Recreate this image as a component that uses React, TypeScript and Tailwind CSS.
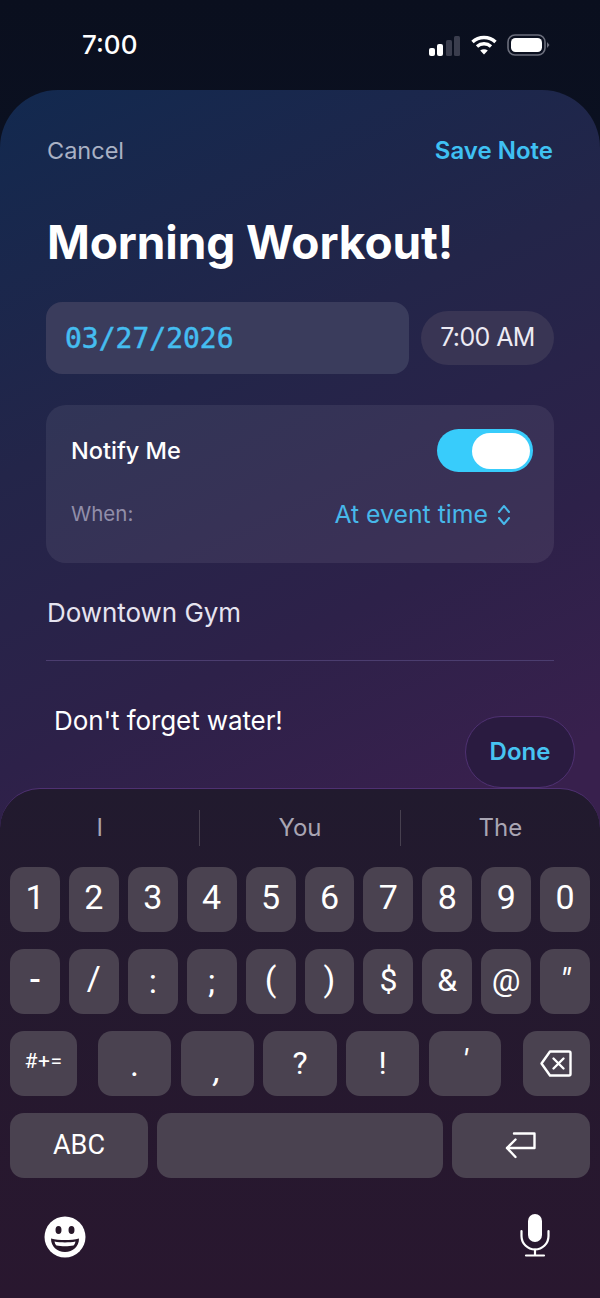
import type { ReactNode } from "react";

const row1 = ["1", "2", "3", "4", "5", "6", "7", "8", "9", "0"];

// ── Small drawn icons ─────────────────────────────────────────────────────
function StatusIcons() {
  return (
    <div className="flex items-center">
      <svg width="32" height="20" viewBox="0 0 32 20" className="mt-[1px]">
        <rect x="0" y="12" width="6" height="8" rx="2" fill="#fff" />
        <rect x="8" y="8" width="6" height="12" rx="2" fill="#fff" />
        <rect x="17" y="4" width="6" height="16" rx="1.5" fill="#3a3d4d" />
        <rect x="25" y="0" width="6" height="20" rx="1.5" fill="#3a3d4d" />
      </svg>
      <svg width="26" height="20" viewBox="0 0 26 20" className="ml-[10px]" fill="none" stroke="#fff" strokeWidth="3.4">
        <path d="M1.5 7C7.8 1 18.2 1 24.5 7" />
        <path d="M6 11.500c4-3.600 10-3.600 14 0" />
        <path d="M13 19.500l-3.800-4c2.200-1.700 5.400-1.700 7.600 0z" fill="#fff" stroke="none" />
      </svg>
      <svg width="43" height="22" viewBox="0 0 43 22" className="ml-[10px]" fill="none">
        <rect x="1" y="1" width="37" height="20" rx="7" stroke="#6b6e7c" strokeWidth="1.6" />
        <rect x="4" y="4" width="31" height="14" rx="4.500" fill="#fff" />
        <path d="M40 8l2.500 3-2.500 3z" fill="#6b6e7c" />
      </svg>
    </div>
  );
}

function Chevrons() {
  return (
    <svg width="14" height="22" viewBox="0 0 14 22" fill="none" stroke="#47b8ea" strokeWidth="2" strokeLinecap="round" strokeLinejoin="round">
      <path d="M2 8l5-6 5 6" />
      <path d="M2 14l5 6 5-6" />
    </svg>
  );
}

function DeleteIcon() {
  return (
    <svg width="32" height="27" viewBox="0 0 32 27" fill="none" stroke="#fff" strokeWidth="2.400" strokeLinejoin="round" strokeLinecap="round">
      <path d="M10 1.500h19a1.500 1.500 0 0 1 1.500 1.500v21a1.500 1.500 0 0 1-1.500 1.500H10L1.500 13.500z" />
      <path d="M13.500 8.500l10 10M23.500 8.500l-10 10" />
    </svg>
  );
}

function ReturnIcon() {
  return (
    <svg width="32" height="27" viewBox="0 0 32 27" fill="none" stroke="#fff" strokeWidth="2.400" strokeLinejoin="round" strokeLinecap="round">
      <path d="M9 1.500h20.500v14.500H2" />
      <path d="M10.500 7.500L2 16l8.500 9" />
    </svg>
  );
}

function EmojiIcon() {
  return (
    <svg width="42" height="42" viewBox="0 0 42 42">
      <ellipse cx="21" cy="21" rx="20.500" ry="20.500" fill="#fff" />
      <ellipse cx="14.500" cy="14" rx="3" ry="4" fill="#271729" />
      <ellipse cx="27.500" cy="14" rx="3" ry="4" fill="#271729" />
      <path d="M7 22.500c8 2 20 2 28 0 0 8-6 13.500-14 13.500S7 30.500 7 22.500z" fill="#271729" />
      <path d="M10.500 25.500c6 1.200 15 1.200 21 0-.5 2-1 3-2 4-5 1-12 1-17 0-1-1-1.600-2-2-4z" fill="#fff" />
    </svg>
  );
}

function MicIcon() {
  return (
    <svg width="30" height="43" viewBox="0 0 30 43" fill="none" stroke="#fff" strokeWidth="2.200" strokeLinecap="round">
      <rect x="8" y="0" width="14" height="28" rx="7" fill="#fff" stroke="none" />
      <path d="M1.500 17v5c0 7.500 6 13.500 13.500 13.500S28.500 29.500 28.500 22v-5" />
      <path d="M15 35.500V41.500M6 41.500h18" />
    </svg>
  );
}

// ── Keyboard key ──────────────────────────────────────────────────────────
function Key({ children, className = "" }: { children?: ReactNode; className?: string }) {
  return (
    <div className={`h-[65px] rounded-[14px] bg-[#4a4250] flex justify-center items-center text-white font-['Roboto',sans-serif] ${className}`}>
      {children}
    </div>
  );
}

export default function App() {
  return (
    <div className="w-[600px] h-[1298px] overflow-hidden flex flex-col bg-gradient-to-b from-[#0a0f1e] to-[#111a33] font-['Inter',sans-serif]">
      {/* Status bar */}
      <div className="h-[90px] shrink-0 flex items-center justify-between pl-[82px] pr-[50px] text-white">
        <span className="text-[26px] font-medium leading-none">7:00</span>
        <StatusIcons />
      </div>

      {/* Sheet */}
      <div className="flex-1 flex flex-col rounded-t-[58px] bg-[linear-gradient(155deg,#12294f_0%,#232549_26%,#2d2149_46%,#38204d_62%,#38204d_100%)]">
        <div className="flex justify-between items-center pl-[47px] pr-[47px] pt-[44px]">
          <span className="text-[23.5px] leading-[34px] text-[#a9b1c4]">Cancel</span>
          <span className="text-[24px] leading-[34px] font-semibold text-[#3fc1f3]">Save Note</span>
        </div>

        <h1 className="mt-[44px] ml-[47px] text-[46px] leading-[60px] font-bold text-white tracking-[-0.1px]">Morning Workout!</h1>

        <div className="mt-[30px] mx-[46px] flex items-center gap-[12px]">
          <div className="w-[363px] h-[72px] rounded-[16px] bg-[#3a3c5c] flex items-center pl-[19px] pt-[2px] text-[28px] font-['DejaVu_Sans_Mono',monospace] text-[#45bdf0] [-webkit-text-stroke:0.5px_#45bdf0]">
            03/27/2026
          </div>
          <div className="flex-1 h-[54px] rounded-full bg-[#393554] flex items-center justify-center text-[25px] text-[#eceaf3] tracking-[-0.6px]">
            7:00 AM
          </div>
        </div>

        {/* Notify card */}
        <div className="mt-[31px] mx-[46px] h-[158px] rounded-[20px] bg-white/[0.07] pl-[25px] pr-[21px] pt-[24px]">
          <div className="flex items-center justify-between">
            <span className="text-[23.5px] font-medium text-white">Notify Me</span>
            <div className="w-[96px] h-[43px] rounded-full bg-[#38ccfb] flex items-center justify-end pr-[3px]">
              <div className="w-[58px] h-[36px] rounded-full bg-white" />
            </div>
          </div>
          <div className="mt-[24px] flex items-center justify-between pr-[22px]">
            <span className="text-[20.5px] text-[#918ea9]">When:</span>
            <span className="flex items-center gap-[9px] text-[24.8px] text-[#47b8ea]">
              At event time
              <Chevrons />
            </span>
          </div>
        </div>

        <div className="mt-[32px] mx-[46px] h-[66px] border-b border-[#4b3d6f] pl-[1px] text-[26px] leading-[36px] text-[#e6e4f0] tracking-[-0.05px]">
          Downtown Gym
        </div>

        {/* Notes + Done */}
        <div className="h-[127px] flex items-start justify-between pl-[54px] pr-[25px]">
          <span className="mt-[42px] text-[26px] leading-[36px] text-white tracking-[-0.1px]">Don't forget water!</span>
          <div className="mt-[55px] w-[110px] h-[72px] rounded-[36px] bg-[#2a1b40] border border-[#4f3172] flex items-center justify-center text-[24px] font-semibold text-[#47c4f2]">
            Done
          </div>
        </div>

        {/* Keyboard */}
        <div className="flex-1 rounded-t-[40px] border-t border-[#4f3172] bg-gradient-to-b from-[#211a2e] to-[#29172f] px-[10px]">
          <div className="-mx-[10px] h-[78px] flex items-center text-[24px] text-[#a9a5b3]">
            <div className="flex-1 text-center h-[36px] leading-[36px]">I</div>
            <div className="flex-1 text-center h-[36px] leading-[36px] border-x border-[#47404f]">You</div>
            <div className="flex-1 text-center h-[36px] leading-[36px]">The</div>
          </div>

          <div className="flex flex-col gap-[17px]">
            <div className="flex gap-[9px]">
              {row1.map((k) => (
                <Key key={k} className="flex-1 text-[34px] pb-[4px]">{k}</Key>
              ))}
            </div>
            <div className="flex gap-[9px]">
              <Key className="flex-1 text-[34px] font-medium pb-[4px]">-</Key>
              <Key className="flex-1 text-[34px] pb-[6px]">/</Key>
              <Key className="flex-1 text-[34px]">:</Key>
              <Key className="flex-1 text-[34px]">;</Key>
              <Key className="flex-1 text-[34px] pb-[4px]">(</Key>
              <Key className="flex-1 text-[34px] pb-[4px]">)</Key>
              <Key className="flex-1 text-[32px] pb-[4px]">$</Key>
              <Key className="flex-1 text-[32px] pb-[4px]">&amp;</Key>
              <Key className="flex-1 text-[32px] pb-[4px]">@</Key>
              <Key className="flex-1 text-[34px] italic pb-[2px]">"</Key>
            </div>
            <div className="flex">
              <Key className="w-[67px] text-[21px] pb-[4px] tracking-[0.5px]">#+=</Key>
              <Key className="ml-[21px] w-[73px] text-[34px] pt-[2px]">.</Key>
              <Key className="ml-[10px] w-[73px] text-[34px] italic pt-[14px]">,</Key>
              <Key className="ml-[9px] w-[74px] text-[32px] pb-[2px]">?</Key>
              <Key className="ml-[9px] w-[73px] text-[32px] pb-[2px]">!</Key>
              <Key className="ml-[10px] w-[72px] text-[32px] italic pb-[8px]">'</Key>
              <Key className="ml-[22px] flex-1 pr-[1px]"><DeleteIcon /></Key>
            </div>
            <div className="flex gap-[9px]">
              <Key className="w-[138px] text-[27px]">ABC</Key>
              <Key className="flex-1" />
              <Key className="w-[138px]"><ReturnIcon /></Key>
            </div>
          </div>

          <div className="mt-[36px] flex items-start justify-between pl-[34px] pr-[40px]">
            <div className="pt-[2px]"><EmojiIcon /></div>
            <MicIcon />
          </div>
        </div>
      </div>
    </div>
  );
}
